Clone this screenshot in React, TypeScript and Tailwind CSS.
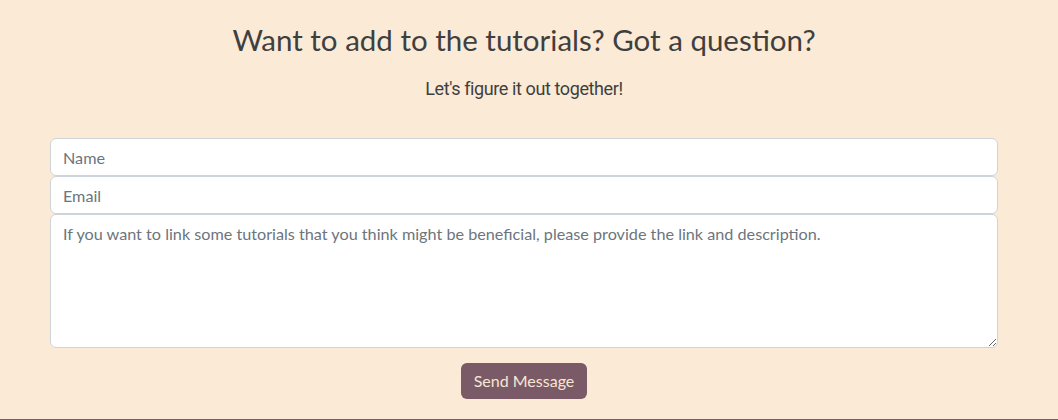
export default function App() {
  return (
    <div className="w-[1058px] h-[420px] bg-[#faead6] border-b border-[#7a5a66] overflow-hidden">
      <div className="w-[1048px]">
        <h1 className="pt-[22px] text-center text-[29.5px] leading-[36px] text-[#3f3f3f] font-['Lato',sans-serif]">
          Want to add to the tutorials? Got a question?
        </h1>
        <p className="mt-[19px] text-center text-[18px] leading-[24px] text-[#3f3f3f] font-['Roboto',sans-serif] tracking-[-0.4px]">
          Let's figure it out together!
        </p>
        <form className="mt-[37px] mx-[50px] flex flex-col font-['Lato',sans-serif]">
          <input
            placeholder="Name"
            className="h-[38px] bg-white border border-[#ced4da] rounded-[6px] px-[12px] text-[16.2px] text-[#495057] placeholder:text-[#6c757d] outline-none"
          />
          <input
            placeholder="Email"
            className="h-[38px] bg-white border border-[#ced4da] rounded-[6px] px-[12px] text-[16.2px] text-[#495057] placeholder:text-[#6c757d] outline-none"
          />
          <textarea
            placeholder="If you want to link some tutorials that you think might be beneficial, please provide the link and description."
            className="h-[134px] bg-white border border-[#ced4da] rounded-[6px] px-[12px] py-[7px] text-[16.2px] leading-[24px] text-[#495057] placeholder:text-[#6c757d] outline-none"
          />
          <div className="flex justify-center mt-[15px]">
            <button
              type="button"
              className="h-[36px] px-[13px] rounded-[6px] bg-[#7a5a66] text-[#f7e6d3] text-[16px]"
            >
              Send Message
            </button>
          </div>
        </form>
      </div>
    </div>
  );
}
